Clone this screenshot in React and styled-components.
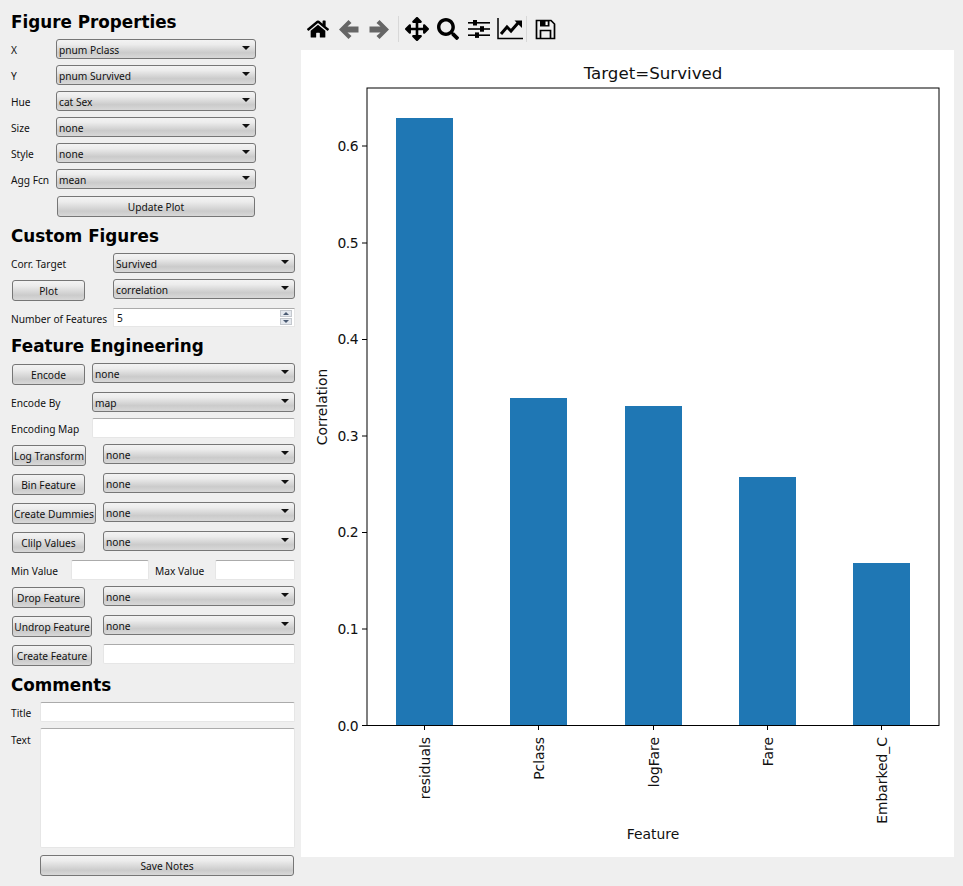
import React from 'react';
import styled, { createGlobalStyle } from 'styled-components';
import { FaHome, FaArrowsAlt, FaSearch } from 'react-icons/fa';

const GlobalStyle = createGlobalStyle`
	html, body {
		margin: 0;
		background: #efefef;
	}
	body {
		width: 963px;
		height: 886px;
		overflow: hidden;
		font-family: "Noto Sans", "Liberation Sans", sans-serif;
		font-size: 10.2px;
		color: #111;
	}
`;

const Page = styled.div`
	display: flex;
	width: 963px;
	height: 886px;
`;

const Sidebar = styled.div`
	display: flex;
	flex-direction: column;
	width: 301px;
	flex: none;
	padding: 0 6px 0 11px;
	box-sizing: border-box;
`;

const Heading = styled.h2`
	margin: ${(p) => p.$top}px 0 0;
	height: 24px;
	line-height: 25px;
	font-family: "DejaVu Sans", sans-serif;
	font-size: 16.8px;
	font-weight: 700;
	color: #000;
	white-space: nowrap;
`;

const Row = styled.div`
	display: flex;
	align-items: flex-start;
	height: ${(p) => p.$height || 20}px;
	margin-top: ${(p) => p.$top ?? 6}px;
`;

const Label = styled.span`
	width: ${(p) => p.$width}px;
	flex: none;
	margin-left: ${(p) => p.$left || 0}px;
	line-height: ${(p) => p.$line || 23}px;
	white-space: nowrap;
`;

const ComboBox = styled.div`
	position: relative;
	flex: ${(p) => (p.$width ? 'none' : 1)};
	width: ${(p) => (p.$width ? `${p.$width}px` : 'auto')};
	height: 20px;
	box-sizing: border-box;
	padding-left: 2px;
	line-height: 20px;
	border: 1px solid #767676;
	border-radius: 3px;
	background: linear-gradient(#f3f3f3, #ececec 25%, #cbcbcb 70%, #d8d8d8);
	white-space: nowrap;
`;

const Arrow = styled.i`
	position: absolute;
	top: 6px;
	right: 5px;
	border-style: solid;
	border-width: 4px 4px 0;
	border-color: #111 transparent transparent;
`;

const PushButton = styled.button`
	display: block;
	flex: none;
	width: ${(p) => (p.$width ? `${p.$width}px` : '100%')};
	height: 21px;
	margin: ${(p) => p.$offset || 1}px ${(p) => p.$after || 0}px 0 ${(p) => p.$left ?? 1}px;
	padding: 0;
	box-sizing: border-box;
	border: 1px solid #767676;
	border-radius: 3px;
	background: linear-gradient(#f3f3f3, #ececec 25%, #cbcbcb 75%, #d8d8d8);
	font: inherit;
	color: #111;
	text-align: center;
	white-space: nowrap;
`;

const Field = styled.input`
	display: block;
	flex: ${(p) => (p.$width ? 'none' : 1)};
	width: ${(p) => (p.$width ? `${p.$width}px` : 'auto')};
	min-width: 0;
	height: 20px;
	margin: 0;
	padding: 0 3px;
	box-sizing: border-box;
	border: 1px solid #e6e6e6;
	border-top-color: #ababab;
	border-radius: 2px;
	background: #fff;
	font: inherit;
	outline: none;
`;

const SpinBox = styled.div`
	display: flex;
	align-items: center;
	justify-content: space-between;
	flex: 1;
	height: 19px;
	box-sizing: border-box;
	padding: 0 2px 0 3px;
	border: 1px solid #e6e6e6;
	border-top-color: #ababab;
	background: #fff;
`;

const SpinArrows = styled.div`
	display: flex;
	flex-direction: column;
	gap: 1px;
`;

const SpinStep = styled.span`
	display: flex;
	align-items: center;
	justify-content: center;
	width: 12px;
	height: 7px;
	background: #e4e8ee;
	border: 1px solid #c4c8ce;
	box-sizing: border-box;
	&::after {
		content: '';
		border-style: solid;
		border-color: #4a5a72 transparent;
		border-width: ${(p) => (p.$up ? '0 3px 3px' : '3px 3px 0')};
	}
`;

const NoteArea = styled.textarea`
	display: block;
	flex: 1;
	height: 120px;
	margin: 0;
	padding: 3px;
	box-sizing: border-box;
	border: 1px solid #e6e6e6;
	border-top-color: #ababab;
	border-radius: 2px;
	background: #fff;
	resize: none;
	outline: none;
`;

const Main = styled.div`
	display: flex;
	flex-direction: column;
	flex: none;
	width: 653px;
`;

const Toolbar = styled.div`
	display: flex;
	align-items: center;
	height: 50px;
	padding: 8px 0 0 2px;
	box-sizing: border-box;
`;

const ToolButton = styled.div`
	display: flex;
	align-items: center;
	justify-content: center;
	width: 30.6px;
	height: 28px;
	padding-left: ${(p) => p.$nudge || 0}px;
	box-sizing: border-box;
	color: #000;
	font-size: ${(p) => p.$size || 22}px;
`;

const ToolSeparator = styled.div`
	width: 1px;
	height: 26px;
	margin: 0 ${(p) => p.$right}px 0 ${(p) => p.$left}px;
	background: #d8d8d8;
`;

const FigurePanel = styled.div`
	height: 807px;
	background: #fff;
`;

const Canvas = styled.svg`
	display: block;
	font-family: "DejaVu Sans", sans-serif;
	fill: #111;
`;

const Combo = ({ children, width }) => (
	<ComboBox $width={width}>
		{children}
		<Arrow />
	</ComboBox>
);

const propertyRows = [
	['X', 'pnum Pclass'],
	['Y', 'pnum Survived'],
	['Hue', 'cat Sex'],
	['Size', 'none'],
	['Style', 'none'],
	['Agg Fcn', 'mean'],
];

const ActionRow = ({ label, width, after, top }) => (
	<Row $top={top ?? 9}>
		<PushButton $width={width} $after={after}>{label}</PushButton>
		<Combo>none</Combo>
	</Row>
);

const ArrowIcon = ({ flip }) => (
	<svg width="20" height="19" viewBox="0 0 20 19" fill="#666" transform={flip ? 'scale(-1 1)' : undefined}>
		<path d="M9.5 0l3 3-4 3.5h11v6h-11l4 3.5-3 3L0 9.5z" />
	</svg>
);

const SliderIcon = () => (
	<svg width="22" height="20" viewBox="0 0 22 20" fill="#000">
		<rect x="0" y="3" width="22" height="1.6" />
		<rect x="0" y="9.2" width="22" height="1.6" />
		<rect x="0" y="15.4" width="22" height="1.6" />
		<rect x="5" y="1" width="4" height="5.5" />
		<rect x="12" y="7.2" width="4" height="5.5" />
		<rect x="7" y="13.4" width="4" height="5.5" />
	</svg>
);

const LineChartIcon = () => (
	<svg width="26" height="22" viewBox="0 0 26 22" fill="none" stroke="#000">
		<path d="M1 0v20.5h25" strokeWidth="1.5" />
		<path d="M4 16l6-7 4 4 7-8" strokeWidth="3" />
		<path d="M17.5 2.5H25V10z" fill="#000" stroke="none" />
	</svg>
);

const SaveIcon = () => (
	<svg width="21" height="21" viewBox="0 0 21 21" fill="none" stroke="#000" strokeWidth="1.7">
		<path d="M1.5 1.5h14.5l3.5 3.5v14.5h-18z" />
		<path d="M5.5 19.5v-8h10v8" />
		<path d="M5 1h9.5v6.5H5z" fill="#000" stroke="none" />
		<path d="M10.5 2.5h2.2v3.6h-2.2z" fill="#fff" stroke="none" />
	</svg>
);

const bars = [
	{ name: 'residuals', x: 396, top: 118 },
	{ name: 'Pclass', x: 510, top: 398 },
	{ name: 'logFare', x: 625, top: 406 },
	{ name: 'Fare', x: 739, top: 477 },
	{ name: 'Embarked_C', x: 853, top: 563 },
];

// label, tick line, text baseline
const yTicks = [
	['0.0', 725.5, 730.5],
	['0.1', 629, 633.5],
	['0.2', 532.5, 537],
	['0.3', 436, 440.5],
	['0.4', 339.5, 344],
	['0.5', 243, 247.5],
	['0.6', 146, 150.5],
];

const BarChart = () => (
	<Canvas width="653" height="807" viewBox="301 50 653 807">
		<text x="653" y="79" fontSize="16.67" textAnchor="middle">Target=Survived</text>
		{bars.map((b) => (
			<rect key={b.name} x={b.x} y={b.top} width="57" height={725 - b.top} fill="#1f77b4" />
		))}
		<rect x="367" y="88" width="572" height="637.5" fill="none" stroke="#000" />
		{yTicks.map(([label, y, base]) => (
			<g key={label}>
				<line x1="362" x2="367" y1={y} y2={y} stroke="#000" />
				<text x="358" y={base} fontSize="13.89" letterSpacing="-0.5" textAnchor="end">{label}</text>
			</g>
		))}
		{bars.map((b) => (
			<g key={b.name}>
				<line x1={b.x + 28.5} x2={b.x + 28.5} y1="725" y2="730" stroke="#000" />
				<text
					transform={`translate(${b.x + 33.5} 737) rotate(-90)`}
					fontSize="13.89"
					textAnchor="end"
				>
					{b.name}
				</text>
			</g>
		))}
		<text x="653" y="839" fontSize="13.89" textAnchor="middle">Feature</text>
		<text transform="translate(327 407) rotate(-90)" fontSize="13.89" textAnchor="middle">Correlation</text>
	</Canvas>
);

const App = () => (
	<Page>
		<GlobalStyle />
		<Sidebar>
			<Heading $top={10}>Figure Properties</Heading>
			{propertyRows.map(([label, value], i) => (
				<Row key={label} $top={i === 0 ? 5 : 6}>
					<Label $width={45}>{label}</Label>
					<Combo width={200}>{value}</Combo>
				</Row>
			))}
			<Row $top={6} $height={22}>
				<PushButton $width={198} $left={46}>Update Plot</PushButton>
			</Row>

			<Heading $top={7}>Custom Figures</Heading>
			<Row $top={5}>
				<Label $width={102}>Corr. Target</Label>
				<Combo>Survived</Combo>
			</Row>
			<Row $top={6} $height={22}>
				<PushButton $width={73} $after={28}>Plot</PushButton>
				<Combo>correlation</Combo>
			</Row>
			<Row $top={7} $height={19}>
				<Label $width={102}>Number of Features</Label>
				<SpinBox>
					5
					<SpinArrows>
						<SpinStep $up />
						<SpinStep />
					</SpinArrows>
				</SpinBox>
			</Row>

			<Heading $top={7}>Feature Engineering</Heading>
			<Row $top={5} $height={22}>
				<PushButton $width={73} $after={7}>Encode</PushButton>
				<Combo>none</Combo>
			</Row>
			<Row $top={7}>
				<Label $width={81}>Encode By</Label>
				<Combo>map</Combo>
			</Row>
			<Row $top={6}>
				<Label $width={81}>Encoding Map</Label>
				<Field />
			</Row>
			<ActionRow label="Log Transform" width={74} after={17} top={6} />
			<ActionRow label="Bin Feature" width={73} after={18} />
			<ActionRow label="Create Dummies" width={84} after={7} />
			<ActionRow label="Clilp Values" width={73} after={18} />
			<Row $top={9}>
				<Label $width={60}>Min Value</Label>
				<Field $width={78} />
				<Label $width={60} $left={6}>Max Value</Label>
				<Field />
			</Row>
			<ActionRow label="Drop Feature" width={73} after={18} top={6} />
			<ActionRow label="Undrop Feature" width={80} after={11} />
			<Row $top={9} $height={22}>
				<PushButton $width={80} $after={11}>Create Feature</PushButton>
				<Field />
			</Row>

			<Heading $top={7}>Comments</Heading>
			<Row $top={5}>
				<Label $width={29}>Title</Label>
				<Field />
			</Row>
			<Row $top={6} $height={120}>
				<Label $width={29} $line={24}>Text</Label>
				<NoteArea />
			</Row>
			<Row $top={6} $height={22}>
				<PushButton $left={29} $width={254}>Save Notes</PushButton>
			</Row>
		</Sidebar>
		<Main>
			<Toolbar>
				<ToolButton><FaHome /></ToolButton>
				<ToolButton><ArrowIcon /></ToolButton>
				<ToolButton><ArrowIcon flip /></ToolButton>
				<ToolSeparator $left={3} $right={3} />
				<ToolButton $size={24}><FaArrowsAlt /></ToolButton>
				<ToolButton><FaSearch /></ToolButton>
				<ToolButton $nudge={2}><SliderIcon /></ToolButton>
				<ToolButton $nudge={2}><LineChartIcon /></ToolButton>
				<ToolSeparator $left={2} $right={3} />
				<ToolButton><SaveIcon /></ToolButton>
			</Toolbar>
			<FigurePanel>
				<BarChart />
			</FigurePanel>
		</Main>
	</Page>
);

export default App;
